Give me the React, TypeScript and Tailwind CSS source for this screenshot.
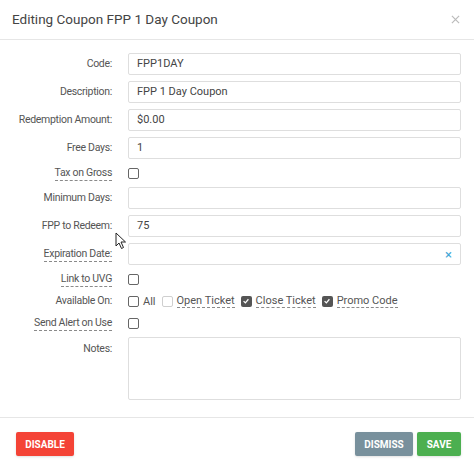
import React from "react";

const font = { fontFamily: "Roboto, 'Liberation Sans', sans-serif" };

function Label({ text, dashed }: { text: string; dashed?: boolean }) {
  return (
    <div className="w-[113px] shrink-0 whitespace-nowrap pr-[16px] text-right text-[10.5px] leading-none tracking-[-0.3px] text-[#555]">
      <span className={dashed ? "border-b border-dashed border-[#8a8a8a] pb-[1px]" : ""}>{text}</span>
    </div>
  );
}

function Box({ checked, disabled }: { checked?: boolean; disabled?: boolean }) {
  if (checked) {
    return (
      <span className="flex h-[11px] w-[11px] shrink-0 items-center justify-center rounded-[2px] bg-[#555]">
        <svg viewBox="0 0 10 10" className="h-[8px] w-[8px]">
          <path d="M2 5.2 L4.2 7.3 L8 2.8" fill="none" stroke="#fff" strokeWidth="1.6" />
        </svg>
      </span>
    );
  }
  return (
    <span
      className={
        "h-[11px] w-[11px] shrink-0 rounded-[2px] border bg-white " +
        (disabled ? "border-[#cfcfcf] bg-[#f3f3f3]" : "border-[#666]")
      }
    />
  );
}

function InputRow({ label, value, dashed, clear }: { label: string; value?: string; dashed?: boolean; clear?: boolean }) {
  return (
    <div className="flex items-center">
      <Label text={label} dashed={dashed} />
      <div className="flex h-[22px] flex-1 items-center justify-between rounded-[2px] border border-[#dedede] px-[8px] text-[11px] text-[#444]">
        <span>{value}</span>
        {clear && <span className="text-[13px] leading-none text-[#3fa7d6]">×</span>}
      </div>
    </div>
  );
}

function CheckRow({ label, dashed, children }: { label: string; dashed?: boolean; children?: React.ReactNode }) {
  return (
    <div className="flex h-[16px] items-center">
      <Label text={label} dashed={dashed} />
      <div className="flex items-center">{children ?? <Box />}</div>
    </div>
  );
}

function Opt({ text, dashed, checked, disabled }: { text: string; dashed?: boolean; checked?: boolean; disabled?: boolean }) {
  return (
    <div className="mr-[6px] flex items-center gap-[4px]">
      <Box checked={checked} disabled={disabled} />
      <span className={"text-[11px] leading-none text-[#555] " + (dashed ? "border-b border-dashed border-[#8a8a8a] pb-[1px]" : "")}>
        {text}
      </span>
    </div>
  );
}

export default function App() {
  return (
    <div className="relative h-[466px] w-[474px] overflow-hidden bg-white" style={font}>
      <div className="flex h-[40px] items-center justify-between border-b border-[#e6e6e6] pl-[12px] pr-[14px]">
        <h1 className="text-[13.5px] text-[#444]">Editing Coupon FPP 1 Day Coupon</h1>
        <svg viewBox="0 0 10 10" className="h-[9px] w-[9px]">
          <path d="M1 1 L9 9 M9 1 L1 9" stroke="#bbb" strokeWidth="1.3" />
        </svg>
      </div>

      <div className="flex flex-col gap-[6px] pl-[15px] pr-[13px] pt-[13px]">
        <InputRow label="Code:" value="FPP1DAY" />
        <InputRow label="Description:" value="FPP 1 Day Coupon" />
        <InputRow label="Redemption Amount:" value="$0.00" />
        <InputRow label="Free Days:" value="1" />
        <CheckRow label="Tax on Gross" dashed />
        <InputRow label="Minimum Days:" />
        <InputRow label="FPP to Redeem:" value="75" />
        <InputRow label="Expiration Date:" dashed clear />
        <CheckRow label="Link to UVG" dashed />
        <CheckRow label="Available On:">
          <Opt text="All" />
          <Opt text="Open Ticket" dashed disabled />
          <Opt text="Close Ticket" dashed checked />
          <Opt text="Promo Code" dashed checked />
        </CheckRow>
        <CheckRow label="Send Alert on Use" dashed />
        <div className="flex">
          <div className="pt-[7px]">
            <Label text="Notes:" />
          </div>
          <div className="h-[63px] flex-1 rounded-[2px] border border-[#dedede]" />
        </div>
      </div>

      <div className="absolute bottom-[48px] left-0 right-0 border-t border-[#e6e6e6]" />
      <div className="absolute bottom-[10px] left-[16px] right-[13px] flex items-center justify-between">
        <button className="h-[24px] w-[58px] rounded-[2px] bg-[#f44336] text-[10px] font-bold text-white shadow-sm">DISABLE</button>
        <div className="flex gap-[4px]">
          <button className="h-[24px] w-[58px] rounded-[2px] bg-[#78909c] text-[10px] font-bold text-white shadow-sm">DISMISS</button>
          <button className="h-[24px] w-[44px] rounded-[2px] bg-[#4caf50] text-[10px] font-bold text-white shadow-sm">SAVE</button>
        </div>
      </div>

      <svg viewBox="0 0 12 18" className="absolute left-[115px] top-[232px] h-[18px] w-[12px]">
        <path d="M1 1 L1 14 L4 11 L6.5 16.5 L8.5 15.5 L6 10 L10.5 10 Z" fill="#fff" stroke="#222" strokeWidth="1" strokeLinejoin="round" />
      </svg>
    </div>
  );
}
